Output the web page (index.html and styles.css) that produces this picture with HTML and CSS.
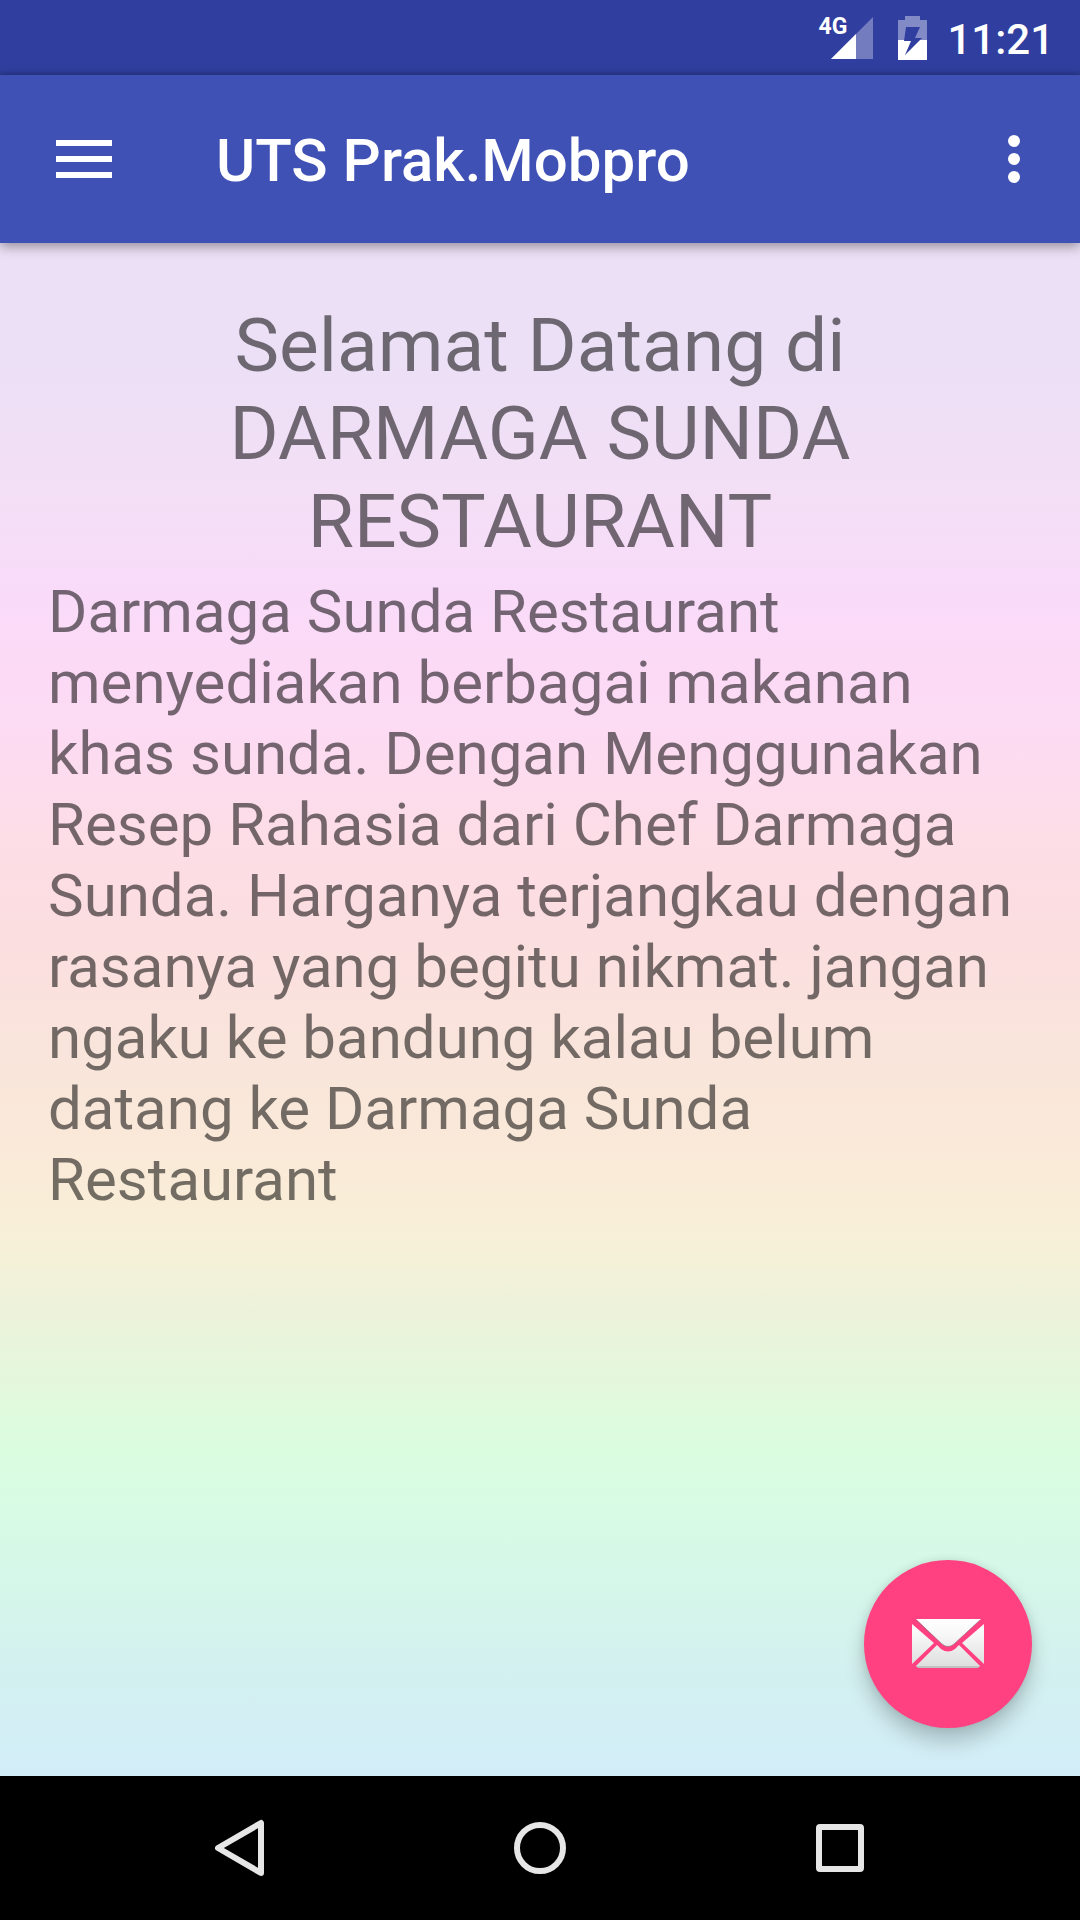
FILE: index.html
```html
<!DOCTYPE html>
<html lang="id">
<head>
<meta charset="utf-8">
<meta name="viewport" content="width=device-width, initial-scale=1">
<title>UTS Prak.Mobpro</title>
<link rel="stylesheet" href="styles.css">
</head>
<body>
<div class="status-bar">
  <div class="signal">
    <span class="network">4G</span>
    <svg class="signal-icon" viewBox="0 0 44 44" aria-hidden="true">
      <path d="M1 43 43 1V43Z" fill="#fff" fill-opacity=".32"/>
      <path d="M1 43 26 18V43Z" fill="#fff"/>
    </svg>
  </div>
  <svg class="battery" viewBox="0 0 29 44" aria-hidden="true">
    <defs>
      <clipPath id="empty"><path d="M0 0H29V24H0Z"/></clipPath>
      <clipPath id="charged"><path d="M0 24H29V44H0Z"/></clipPath>
    </defs>
    <g fill="#fff" fill-rule="evenodd">
      <path clip-path="url(#empty)" fill-opacity=".4" d="M7 0H22V4H29V44H0V4H7ZM8 11H22L17 22H24L7 39 13 25H6Z"/>
      <path clip-path="url(#charged)" d="M7 0H22V4H29V44H0V4H7ZM8 11H22L17 22H24L7 39 13 25H6Z"/>
    </g>
  </svg>
  <time class="clock">11:21</time>
</div>
<header class="toolbar">
  <button class="icon-button" type="button" aria-label="Menu">
    <svg class="menu-icon" viewBox="0 0 56 38" aria-hidden="true"><path d="M0 0H56V6H0ZM0 16H56V22H0ZM0 32H56V38H0Z" fill="#fff"/></svg>
  </button>
  <h1 class="title">UTS Prak.Mobpro</h1>
  <button class="icon-button overflow" type="button" aria-label="More options">
    <svg class="dots-icon" viewBox="0 0 12 48" aria-hidden="true"><g fill="#fff"><circle cx="6" cy="6" r="6"/><circle cx="6" cy="24" r="6"/><circle cx="6" cy="42" r="6"/></g></svg>
  </button>
</header>
<main class="content">
  <h2 class="welcome">Selamat Datang di DARMAGA SUNDA RESTAURANT</h2>
  <p class="about">Darmaga Sunda Restaurant menyediakan berbagai makanan khas sunda. Dengan Menggunakan Resep Rahasia dari Chef Darmaga Sunda. Harganya terjangkau dengan rasanya yang begitu nikmat. jangan ngaku ke bandung kalau belum datang ke Darmaga Sunda Restaurant</p>
  <button class="fab" type="button" aria-label="Email">
    <svg class="mail-icon" viewBox="0 0 72 50" aria-hidden="true">
      <defs>
        <linearGradient id="paper" x1="0" y1="0" x2="0" y2="50" gradientUnits="userSpaceOnUse">
          <stop offset="0" stop-color="#fff"/><stop offset=".3" stop-color="#f8f8f8"/><stop offset="1" stop-color="#dcdcdc"/>
        </linearGradient>
      </defs>
      <g fill="url(#paper)">
        <path d="M4 0H69L42 25Q36 30 30 25Z"/>
        <path d="M0 5 22 24 0 45Z"/>
        <path d="M72 5 50 24 72 45Z"/>
        <path d="M25 26 29 30Q36 35 43 30L47 26 68 47Q67 49 65 49H7Q5 49 4 47Z"/>
      </g>
      <path d="M4 1 30 25Q36 30 42 25L68 1M5 48H67" fill="none" stroke="#777" stroke-opacity=".55"/>
    </svg>
  </button>
</main>
<nav class="nav-bar" aria-label="System">
  <button class="nav-button" type="button" aria-label="Back">
    <svg class="nav-icon" viewBox="0 0 60 60" aria-hidden="true"><path d="M8 30 51 5V55Z"/></svg>
  </button>
  <button class="nav-button" type="button" aria-label="Home">
    <svg class="nav-icon" viewBox="0 0 60 60" aria-hidden="true"><circle cx="30" cy="30" r="23"/></svg>
  </button>
  <button class="nav-button" type="button" aria-label="Recent apps">
    <svg class="nav-icon" viewBox="0 0 60 60" aria-hidden="true"><rect x="9" y="9" width="42" height="42" rx="1"/></svg>
  </button>
</nav>
</body>
</html>
```
FILE: styles.css
```css
* {
  box-sizing: border-box;
}

body {
  margin: 0;
  min-height: 100vh;
  display: flex;
  flex-direction: column;
  font-family: Roboto, "Noto Sans", sans-serif;
}

button {
  border: 0;
  padding: 0;
  background: none;
  cursor: pointer;
}

svg {
  display: block;
}

.status-bar {
  height: 75px;
  padding-right: 26px;
  display: flex;
  justify-content: flex-end;
  align-items: center;
  background: linear-gradient(#303f9f 94%, #2b388e);
  color: #fff;
}

.signal {
  position: relative;
  margin-right: 24px;
  padding-left: 12px;
}

.network {
  position: absolute;
  top: -1px;
  left: 0;
  font-size: 23px;
  line-height: 24px;
  font-weight: 700;
}

.signal-icon {
  width: 44px;
  height: 44px;
}

.battery {
  width: 29px;
  height: 44px;
  margin-right: 20px;
  padding-bottom: 0;
}

.clock {
  padding-top: 4px;
  font-size: 42px;
  line-height: 48px;
  font-weight: 500;
}

.toolbar {
  position: relative;
  z-index: 1;
  height: 168px;
  display: flex;
  align-items: center;
  background: #3f51b5;
  box-shadow: 0 3px 12px rgba(0, 0, 0, .4);
}

.icon-button {
  width: 168px;
  height: 168px;
  display: flex;
  align-items: center;
  justify-content: center;
}

.overflow {
  width: 132px;
}

.menu-icon {
  width: 56px;
  height: 38px;
}

.dots-icon {
  width: 12px;
  height: 48px;
}

.title {
  flex: 1;
  margin: 0;
  padding: 4px 0 0 48px;
  color: #fff;
  font-size: 60px;
  line-height: 72px;
  font-weight: 500;
}

.content {
  position: relative;
  flex: 1;
  padding: 58px 48px 48px;
  color: rgba(0, 0, 0, .54);
  background: linear-gradient(#ece0f6 0%, #ece0f6 8%, #f3dff6 16%, #f9dbf9 23%, #fcdaf6 28%, #fcdbf3 32%, #fddde6 39%, #fbdee0 45%, #f9e5db 53%, #faead8 60%, #f8f0d8 65%, #eef2da 69%, #e4f7dc 74%, #dafde0 79%, #d7fbe5 83%, #d5f6ea 88%, #d3f0f1 94%, #d2edf8 100%);
}

.welcome {
  margin: 0 0 11px;
  font-size: 75px;
  line-height: 88px;
  font-weight: 400;
  text-align: center;
}

.about {
  margin: 0;
  font-size: 60px;
  line-height: 71px;
}

.fab {
  position: absolute;
  right: 48px;
  bottom: 48px;
  width: 168px;
  height: 168px;
  display: flex;
  align-items: center;
  justify-content: center;
  border-radius: 50%;
  background: #ff4081;
  box-shadow: 0 14px 20px rgba(0, 0, 0, .2), 0 0 8px rgba(0, 0, 0, .1);
}

.mail-icon {
  width: 72px;
  height: 50px;
}

.nav-bar {
  height: 144px;
  padding: 0 90px;
  display: grid;
  grid-template-columns: repeat(3, 1fr);
  background: #000;
}

.nav-button {
  display: flex;
  align-items: center;
  justify-content: center;
}

.nav-icon {
  width: 60px;
  height: 60px;
  fill: none;
  stroke: #e6e6e6;
  stroke-width: 6;
  stroke-linejoin: round;
}
```
